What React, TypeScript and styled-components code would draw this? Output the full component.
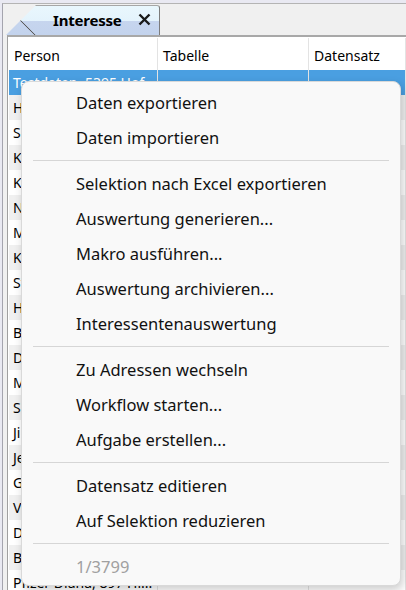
import React from "react";
import styled, { createGlobalStyle } from "styled-components";

const GlobalStyle = createGlobalStyle`
    html, body {
        margin: 0;
        padding: 0;
        background: #ffffff;
    }
    * {
        box-sizing: border-box;
    }
`;

const Window = styled.div`
    position: relative;
    width: 406px;
    height: 590px;
    overflow: hidden;
    background: #e9e9f2;
    font-family: "Noto Sans", "Open Sans", sans-serif;
    color: #000;
`;

const Frame = styled.div`
    margin: 3px 0 0 2px;
    height: calc(100% - 3px);
    display: flex;
    flex-direction: column;
    background: #f0f0f0;
    border-left: 1px solid #a4a4ae;
    border-top: 1px solid #b4b4b4;
`;

const TabStrip = styled.div`
    height: 31px;
    padding: 1px 0 0 3px;
    display: flex;
    align-items: flex-start;
`;

const Tab = styled.div`
    position: relative;
    width: 154px;
    height: 30px;
    display: flex;
    align-items: center;
    gap: 16px;
    padding: 0 0 2px 47px;
    clip-path: polygon(30px 0, 100% 0, 100% 100%, 0 100%);
    background: linear-gradient(#e9f7fd 0, #e4f3fc 52%, #c6d5ee 52%, #c3d3ed 100%);
    border-top: 1px solid #a6a6a6;
    border-right: 1px solid #7c7c7c;
    border-top-right-radius: 3px;

    &::before {
        content: "";
        position: absolute;
        left: 0;
        top: 0;
        width: 31px;
        height: 31px;
        background: linear-gradient(
            to top right,
            transparent calc(50% - 0.8px),
            #5a5a5a 50%,
            transparent calc(50% + 0.8px)
        );
    }
`;

const TabLabel = styled.span`
    font-weight: 700;
    font-size: 15px;
    letter-spacing: -0.2px;
`;

const Panel = styled.div`
    flex: 1;
    margin-left: 4px;
    padding: 1px 0 0 1px;
    background: #ffffff;
    border-left: 1px solid #a0a0a0;
    border-top: 2px solid #a8a8a8;
    overflow: hidden;
`;

const Row = styled.div<{ $tone: "head" | "selected" | "white" | "grey" }>`
    display: grid;
    grid-template-columns: 149px 151px 1fr;
    height: ${(p) => (p.$tone === "head" ? "32px" : "25px")};
    font-size: 14px;
    color: ${(p) => (p.$tone === "selected" ? "#ffffff" : "#000000")};
    background: ${(p) =>
        p.$tone === "selected" ? "#4a9fe1" : p.$tone === "grey" ? "#f0f0f0" : "#ffffff"};
`;

const Cell = styled.div<{ $head?: boolean }>`
    display: flex;
    align-items: center;
    padding: ${(p) => (p.$head ? "3px 0 0 5px" : "0 0 0 4px")};
    border-right: 1px solid #e3e3e3;
    white-space: nowrap;
    overflow: hidden;
`;

const Menu = styled.div`
    position: absolute;
    left: 21px;
    top: 81px;
    width: 380px;
    padding: 3px 0 1px;
    display: flex;
    flex-direction: column;
    background: #f9f9f9;
    border: 1px solid #d9d9d9;
    border-radius: 8px;
    box-shadow: 2px 4px 10px rgba(0, 0, 0, 0.2);
`;

const MenuItem = styled.div<{ $disabled?: boolean }>`
    height: 35px;
    display: flex;
    align-items: center;
    padding-left: 54px;
    font-size: 16.5px;
    color: ${(p) => (p.$disabled ? "#a0a0a0" : "#111111")};
`;

const Separator = styled.div`
    height: 11px;
    display: flex;
    align-items: center;
    padding: 0 11px 0 11px;

    &::after {
        content: "";
        flex: 1;
        height: 1px;
        background: #d6d6d6;
    }
`;

const CloseIcon = () => (
    <svg width="13" height="13" viewBox="0 0 13 13">
        <path d="M1.5 1.5 L11.5 11.5 M11.5 1.5 L1.5 11.5" stroke="#1a1a1a" strokeWidth="2.4" />
    </svg>
);

const people = [
    "Testdaten, 5395 Hof",
    "Huber Hans",
    "Schmid Peter",
    "Keller Anna",
    "Kunz Martin",
    "Nussbaum Eva",
    "Meier Stefan",
    "Kaufmann Rita",
    "Steiner Urs",
    "Hofer Lisa",
    "Brunner Karl",
    "Dietrich Paul",
    "Müller Sandra",
    "Suter Beat",
    "Jimenez Carla",
    "Jenni Thomas",
    "Graf Monika",
    "Vogel Daniel",
    "Dubach Ruth",
    "Baumann Erich",
    "Pfizer Diana, 897 Hi...",
];

type Entry = { label: string; disabled?: boolean } | "sep";

const menu: Entry[] = [
    { label: "Daten exportieren" },
    { label: "Daten importieren" },
    "sep",
    { label: "Selektion nach Excel exportieren" },
    { label: "Auswertung generieren..." },
    { label: "Makro ausführen..." },
    { label: "Auswertung archivieren..." },
    { label: "Interessentenauswertung" },
    "sep",
    { label: "Zu Adressen wechseln" },
    { label: "Workflow starten..." },
    { label: "Aufgabe erstellen..." },
    "sep",
    { label: "Datensatz editieren" },
    { label: "Auf Selektion reduzieren" },
    "sep",
    { label: "1/3799", disabled: true },
];

const App = () => {
    return (
        <>
            <GlobalStyle />
            <Window>
                <Frame>
                    <TabStrip>
                        <Tab>
                            <TabLabel>Interesse</TabLabel>
                            <CloseIcon />
                        </Tab>
                    </TabStrip>
                    <Panel>
                        <Row $tone="head">
                            <Cell $head>Person</Cell>
                            <Cell $head>Tabelle</Cell>
                            <Cell $head>Datensatz</Cell>
                        </Row>
                        {people.map((name, i) => (
                            <Row
                                key={i}
                                $tone={i === 0 ? "selected" : i % 2 === 1 ? "grey" : "white"}
                            >
                                <Cell>{name}</Cell>
                                <Cell />
                                <Cell />
                            </Row>
                        ))}
                    </Panel>
                </Frame>
                <Menu>
                    {menu.map((m, i) =>
                        m === "sep" ? (
                            <Separator key={i} />
                        ) : (
                            <MenuItem key={i} $disabled={m.disabled}>
                                {m.label}
                            </MenuItem>
                        )
                    )}
                </Menu>
            </Window>
        </>
    );
};

export default App;
